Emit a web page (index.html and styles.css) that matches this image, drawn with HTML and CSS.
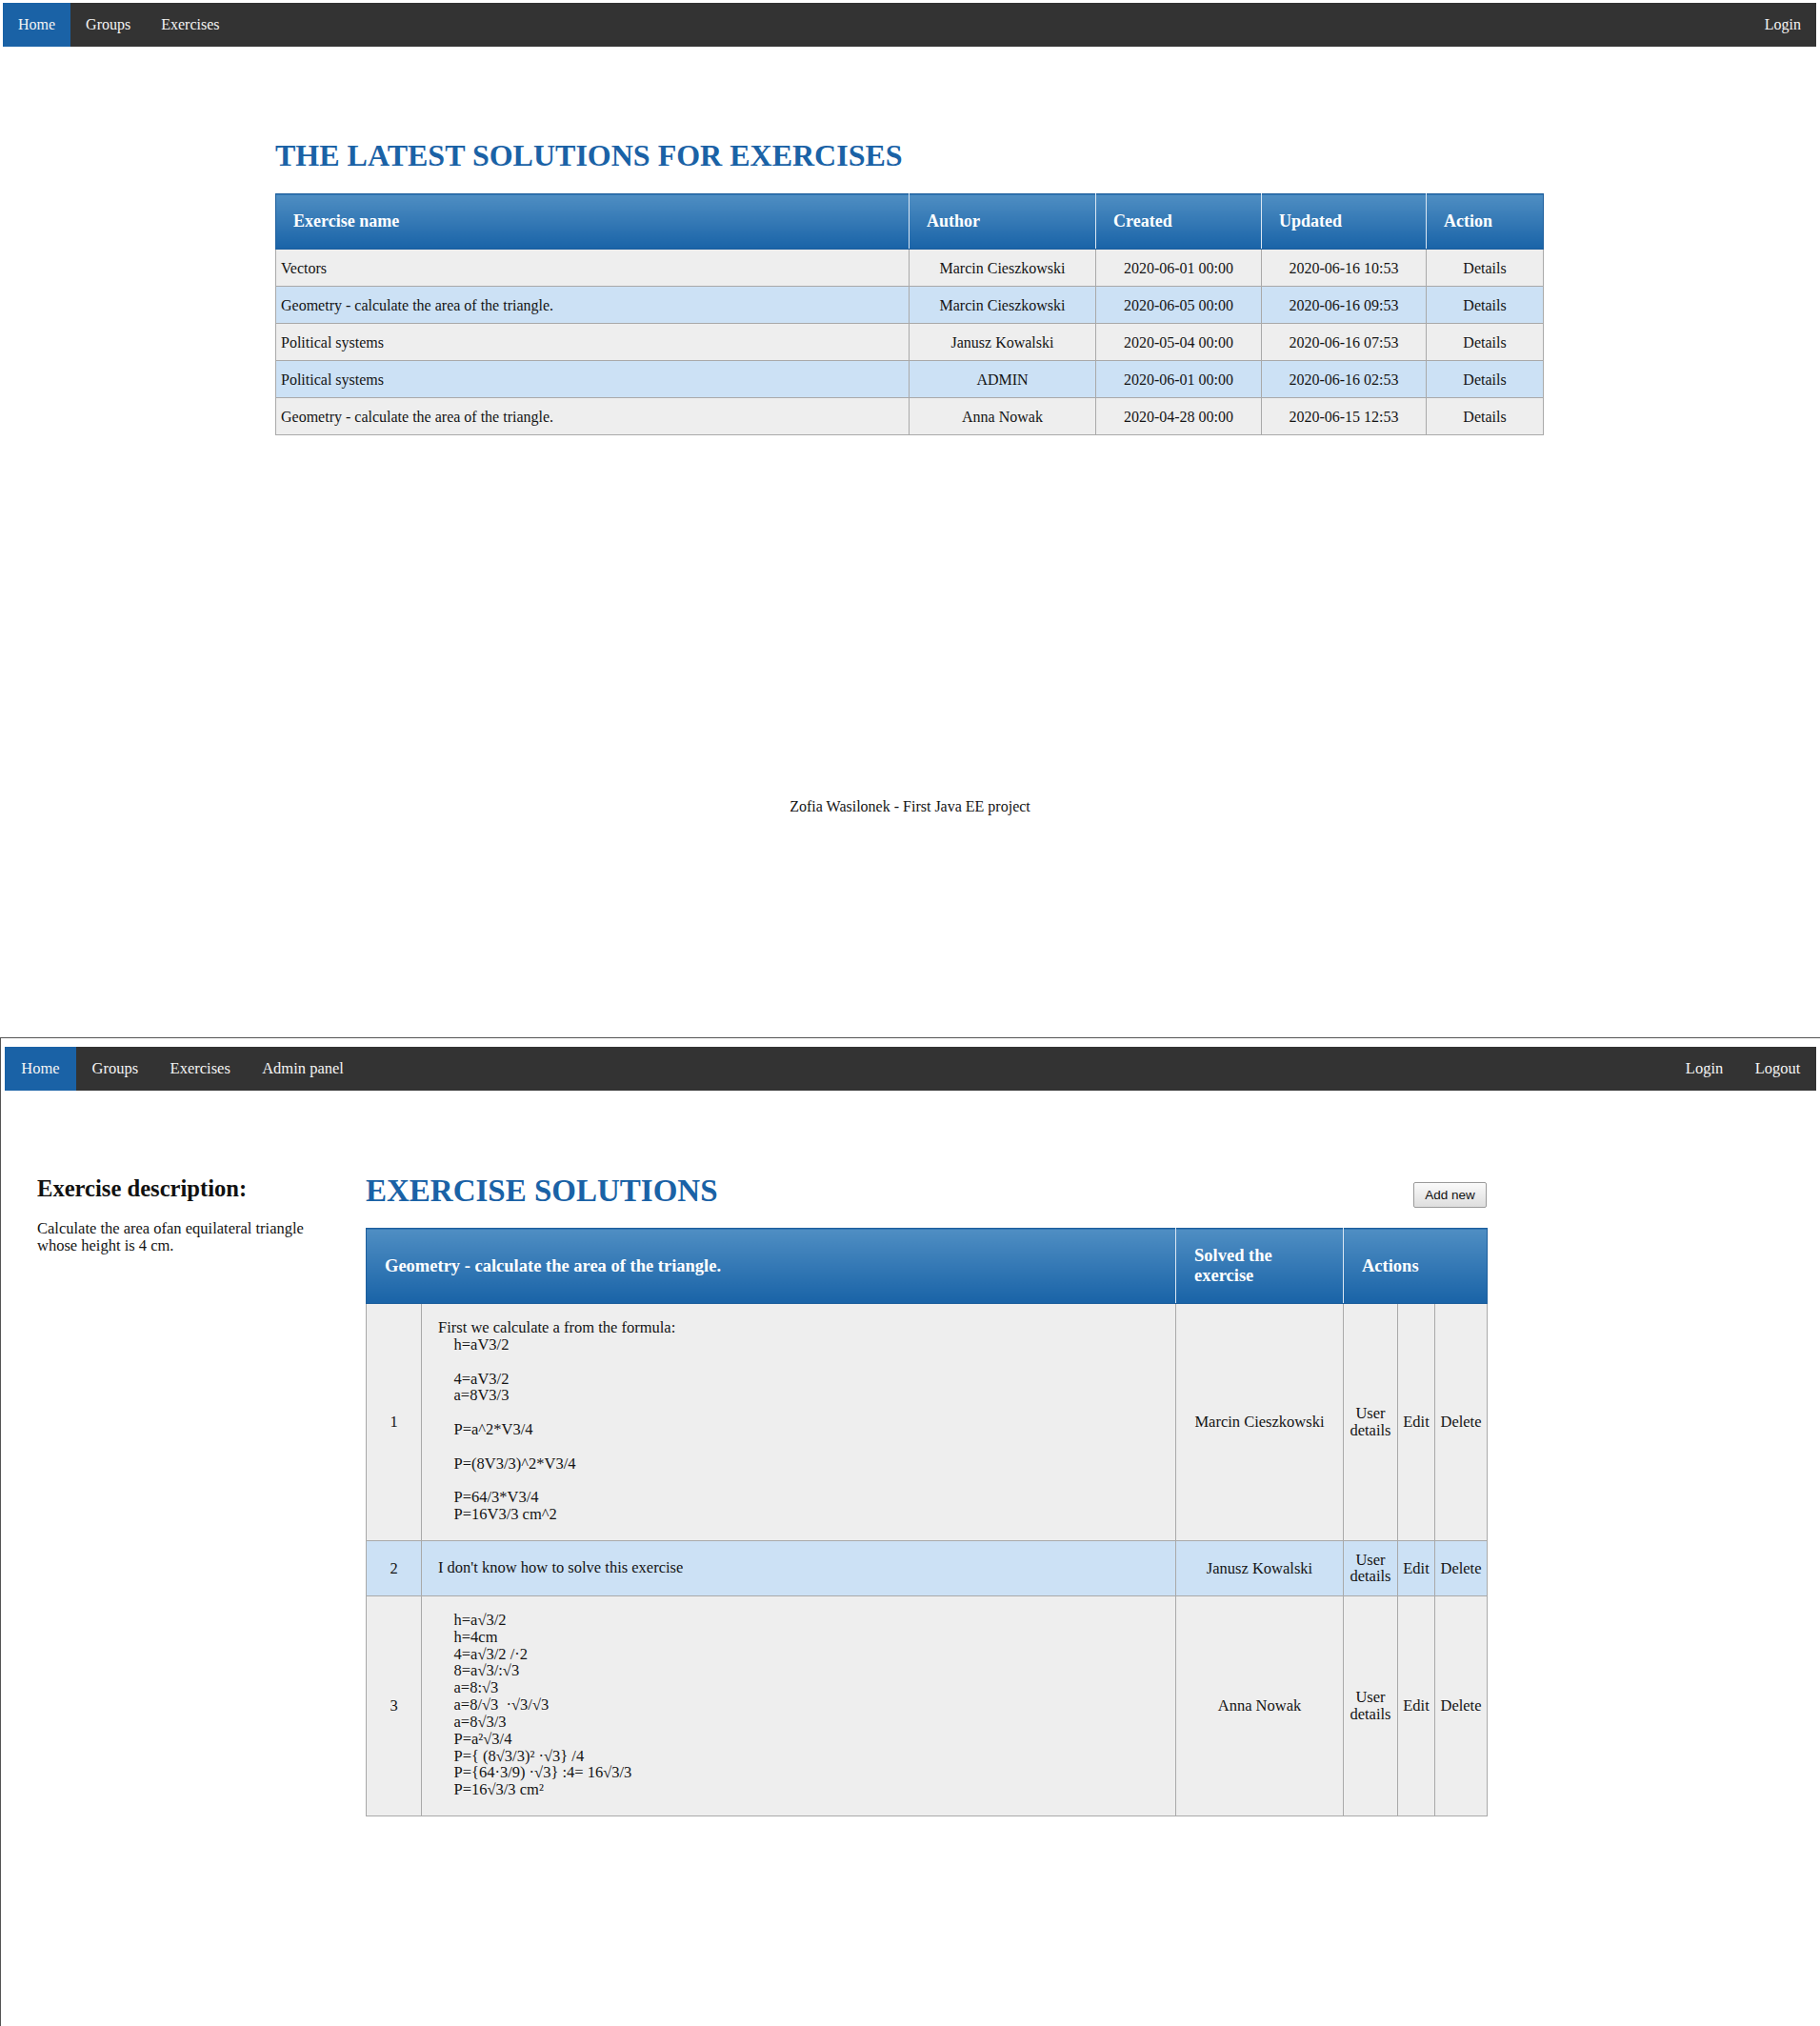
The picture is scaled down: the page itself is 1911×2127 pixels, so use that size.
FILE: index.html
```html
<!DOCTYPE html>
<html lang="en">
<head>
<meta charset="utf-8">
<title>Exercises</title>
<link rel="stylesheet" href="styles.css">
</head>
<body>
<div class="shot shot-top">
  <nav class="navbar">
    <ul class="nav-list">
      <li><a class="nav-link active" href="#">Home</a></li>
      <li><a class="nav-link" href="#">Groups</a></li>
      <li><a class="nav-link" href="#">Exercises</a></li>
    </ul>
    <ul class="nav-list">
      <li><a class="nav-link" href="#">Login</a></li>
    </ul>
  </nav>
  <main class="container">
    <h1 class="page-title">THE LATEST SOLUTIONS FOR EXERCISES</h1>
    <table class="latest">
      <colgroup>
        <col class="c-name"><col class="c-author"><col class="c-created"><col class="c-updated"><col class="c-action">
      </colgroup>
      <thead>
        <tr><th>Exercise name</th><th>Author</th><th>Created</th><th>Updated</th><th>Action</th></tr>
      </thead>
      <tbody>
        <tr><td class="left">Vectors</td><td>Marcin Cieszkowski</td><td>2020-06-01 00:00</td><td>2020-06-16 10:53</td><td>Details</td></tr>
        <tr><td class="left">Geometry - calculate the area of the triangle.</td><td>Marcin Cieszkowski</td><td>2020-06-05 00:00</td><td>2020-06-16 09:53</td><td>Details</td></tr>
        <tr><td class="left">Political systems</td><td>Janusz Kowalski</td><td>2020-05-04 00:00</td><td>2020-06-16 07:53</td><td>Details</td></tr>
        <tr><td class="left">Political systems</td><td>ADMIN</td><td>2020-06-01 00:00</td><td>2020-06-16 02:53</td><td>Details</td></tr>
        <tr><td class="left">Geometry - calculate the area of the triangle.</td><td>Anna Nowak</td><td>2020-04-28 00:00</td><td>2020-06-15 12:53</td><td>Details</td></tr>
      </tbody>
    </table>
  </main>
  <footer class="footer">Zofia Wasilonek - First Java EE project</footer>
</div>

<div class="shot shot-bottom">
  <nav class="navbar">
    <ul class="nav-list">
      <li><a class="nav-link active" href="#">Home</a></li>
      <li><a class="nav-link" href="#">Groups</a></li>
      <li><a class="nav-link" href="#">Exercises</a></li>
      <li><a class="nav-link" href="#">Admin panel</a></li>
    </ul>
    <ul class="nav-list">
      <li><a class="nav-link" href="#">Login</a></li>
      <li><a class="nav-link" href="#">Logout</a></li>
    </ul>
  </nav>
  <div class="layout">
    <aside class="sidebar">
      <h2 class="side-title">Exercise description:</h2>
      <p class="side-text">Calculate the area ofan equilateral triangle whose height is 4 cm.</p>
    </aside>
    <section class="main">
      <div class="main-head">
        <h1 class="page-title big">EXERCISE SOLUTIONS</h1>
        <button class="btn" type="button">Add new</button>
      </div>
      <table class="solutions">
        <colgroup>
          <col class="s-num"><col class="s-content"><col class="s-user"><col class="s-details"><col class="s-edit"><col class="s-delete">
        </colgroup>
        <thead>
          <tr><th colspan="2">Geometry - calculate the area of the triangle.</th><th>Solved the exercise</th><th colspan="3">Actions</th></tr>
        </thead>
        <tbody>
          <tr>
            <td>1</td>
            <td class="content">First we calculate a from the formula:
    h=aV3/2

    4=aV3/2
    a=8V3/3

    P=a^2*V3/4

    P=(8V3/3)^2*V3/4

    P=64/3*V3/4
    P=16V3/3 cm^2</td>
            <td>Marcin Cieszkowski</td><td class="act">User details</td><td class="act">Edit</td><td class="act">Delete</td>
          </tr>
          <tr>
            <td>2</td>
            <td class="content">I don't know how to solve this exercise</td>
            <td>Janusz Kowalski</td><td class="act">User details</td><td class="act">Edit</td><td class="act">Delete</td>
          </tr>
          <tr>
            <td>3</td>
            <td class="content">    h=a√3/2
    h=4cm
    4=a√3/2 /·2
    8=a√3/:√3
    a=8:√3
    a=8/√3  ·√3/√3
    a=8√3/3
    P=a²√3/4
    P={ (8√3/3)² ·√3} /4
    P={64·3/9) ·√3} :4= 16√3/3
    P=16√3/3 cm²</td>
            <td>Anna Nowak</td><td class="act">User details</td><td class="act">Edit</td><td class="act">Delete</td>
          </tr>
        </tbody>
      </table>
    </section>
  </div>
</div>
</body>
</html>
```

FILE: styles.css
```css
* { box-sizing: border-box; }
html, body { margin: 0; padding: 0; background: #fff; }
body {
  width: 1911px;
  font-family: "Liberation Serif", "Times New Roman", serif;
  color: #141414;
}

/* ---------- shared navbar ---------- */
.navbar {
  display: flex;
  justify-content: space-between;
  height: 46px;
  background: #333333;
}
.nav-list { display: flex; list-style: none; margin: 0; padding: 0; }
.nav-link {
  display: block;
  line-height: 46px;
  padding: 0 16px;
  color: #f4f4f4;
  text-decoration: none;
}
.nav-link.active { background: #1a62a6; }

.page-title {
  margin: 0;
  font-weight: bold;
  color: #1a62a6;
}

/* ---------- top screenshot ---------- */
.shot-top {
  height: 1089px;
  padding-top: 3px;
  font-size: 16px;
}
.shot-top .navbar { margin: 0 4px 0 3px; }

.container { width: 1331px; margin: 0 0 0 289px; }
.shot-top .page-title {
  font-size: 32px;
  line-height: 37px;
  margin: 96px 0 21px;
}

.latest {
  width: 100%;
  border-collapse: collapse;
  table-layout: fixed;
}
.c-name { width: 665px; }
.c-author { width: 196px; }
.c-created { width: 174px; }
.c-updated { width: 173px; }
.c-action { width: 123px; }

.latest th,
.solutions th {
  color: #ffffff;
  text-align: left;
  font-weight: bold;
  background: linear-gradient(#4f8ec3, #1963a7);
  border: 1px solid #1d5e9c;
  border-left-color: #dbe7f3;
  border-right-color: #dbe7f3;
}
.latest th:first-child, .solutions th:first-child { border-left-color: #1d5e9c; }
.latest th:last-child, .solutions th:last-child { border-right-color: #1d5e9c; }
.latest th {
  height: 58px;
  padding: 0 18px;
  font-size: 18px;
  line-height: 21px;
}
.latest td {
  height: 39px;
  padding: 0 5px;
  line-height: 19px;
  text-align: center;
  border: 1px solid #a9a9a9;
}
.latest td.left { text-align: left; }
.latest tbody tr:nth-child(odd) td,
.solutions tbody tr:nth-child(odd) td { background: #eeeeee; }
.latest tbody tr:nth-child(even) td,
.solutions tbody tr:nth-child(even) td { background: #cce1f5; }

.footer {
  margin-top: 381px;
  text-align: center;
  line-height: 18px;
}

/* ---------- bottom screenshot ---------- */
.shot-bottom {
  height: 1038px;
  border-top: 1px solid #555555;
  border-left: 1px solid #555555;
  padding-top: 9px;
  font-size: 16.5px;
}
.shot-bottom .navbar { margin: 0 4px 0 4px; }
.shot-bottom .nav-link { padding: 0 16.7px; }
.shot-bottom .nav-link.active { padding: 0 17.3px; }

.layout {
  display: grid;
  grid-template-columns: 345px 1177px;
  padding: 86px 0 0 38px;
}
.sidebar { padding-right: 40px; }
.side-title {
  margin: 3px 0 0;
  font-size: 24.6px;
  line-height: 28px;
  font-weight: bold;
  color: #111;
}
.side-text {
  margin: 19px 0 0;
  line-height: 18px;
}

.main-head {
  display: flex;
  justify-content: space-between;
  align-items: flex-end;
  margin-bottom: 20px;
}
.page-title.big {
  font-size: 33px;
  line-height: 38px;
}
.btn {
  width: 77px;
  height: 27px;
  margin-bottom: 1px;
  padding: 0;
  font-family: "Liberation Sans", Arial, sans-serif;
  font-size: 13.5px;
  color: #111;
  background: linear-gradient(#fafafa, #dedede);
  border: 1px solid #9a9a9a;
  border-radius: 2px;
}

.solutions {
  width: 1177px;
  border-collapse: collapse;
  table-layout: fixed;
}
.s-num { width: 58px; }
.s-content { width: 792px; }
.s-user { width: 176px; }
.s-details { width: 57px; }
.s-edit { width: 39px; }
.s-delete { width: 55px; }

.solutions th {
  padding: 18px 19px;
  font-size: 18.5px;
  line-height: 21px;
}
.solutions td {
  padding: 10.5px 5px;
  line-height: 17.85px;
  text-align: center;
  vertical-align: middle;
  border: 1px solid #a9a9a9;
}
.solutions td.content {
  text-align: left;
  padding: 16px 17px 18px;
  white-space: pre-wrap;
}
```
